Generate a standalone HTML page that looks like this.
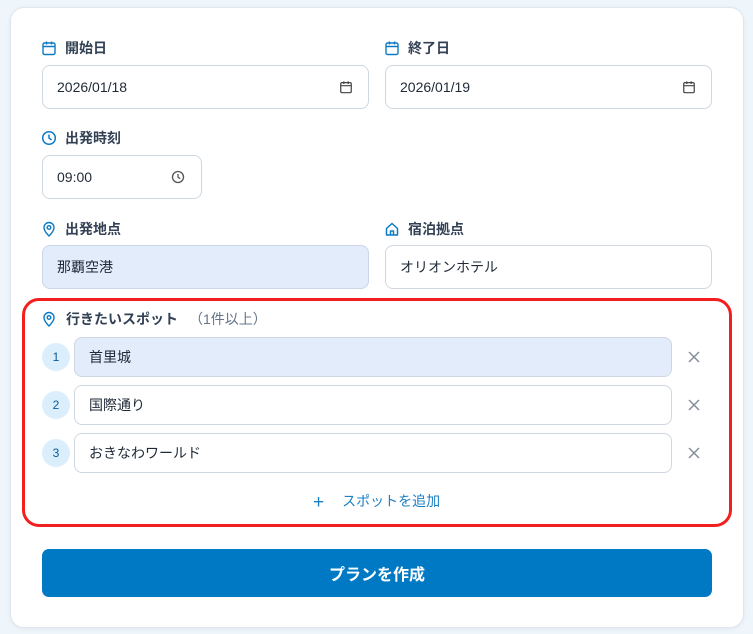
<!DOCTYPE html><html><head><meta charset="utf-8"><style>
*{box-sizing:border-box;margin:0;padding:0}
body{width:753px;height:634px;background:#eef5fb;font-family:"Liberation Sans","Noto Sans CJK JP",sans-serif;position:relative;overflow:hidden;color:#1e293b}
.card{position:absolute;left:10px;top:7px;width:734px;height:621px;background:#fff;border-radius:14px;border:1px solid #dfe6ee;box-shadow:0 1px 4px rgba(0,0,0,.06)}
.a{position:absolute}
.lbl{position:absolute;font-size:14px;font-weight:bold;color:#334155;display:flex;align-items:center;gap:8px;height:20px}
.lbl svg{width:16px;height:16px}
.in{position:absolute;border:1px solid #cfd7e1;border-radius:8px;background:#fff;font-size:14px;color:#1f2937;display:flex;align-items:center;padding-left:14px}
.blue{background:#e2ecfa}
.num{position:absolute;width:28px;height:28px;border-radius:50%;background:#dbeefb;color:#0b5a96;font-size:12px;display:flex;align-items:center;justify-content:center}
.x{position:absolute;width:12px;height:12px}
</style></head><body>
<div class="card"></div>
<svg width="0" height="0" style="position:absolute"><defs>
<symbol id="cal" viewBox="0 0 16 16"><rect x="2" y="3" width="12" height="11.5" rx="1.5" fill="none" stroke="currentColor" stroke-width="1.4"/><path d="M2 6.5h12M5.5 1.5v3M10.5 1.5v3" stroke="currentColor" stroke-width="1.4"/></symbol>
<symbol id="clk" viewBox="0 0 16 16"><circle cx="8" cy="8" r="6.3" fill="none" stroke="currentColor" stroke-width="1.5"/><path d="M8 4.5V8l2.5 2" fill="none" stroke="currentColor" stroke-width="1.5"/></symbol>
<symbol id="pin" viewBox="0 0 16 16"><path d="M8 15s5-4.6 5-8.5A5 5 0 0 0 3 6.5C3 10.4 8 15 8 15z" fill="none" stroke="currentColor" stroke-width="1.4"/><circle cx="8" cy="6.5" r="1.8" fill="none" stroke="currentColor" stroke-width="1.4"/></symbol>
<symbol id="home" viewBox="0 0 16 16"><path d="M2.5 7.5L8 2.5l5.5 5V14h-11z M6.5 14v-4h3v4" fill="none" stroke="currentColor" stroke-width="1.5" stroke-linejoin="round"/></symbol>
<symbol id="xx" viewBox="0 0 12 12"><path d="M1 1L11 11M11 1L1 11" stroke="#808a99" stroke-width="1.4"/></symbol>
</defs></svg>
<div class="lbl" style="left:41px;top:38px"><svg style="color:#0c7bc4"><use href="#cal"/></svg>開始日</div>
<div class="lbl" style="left:384px;top:38px"><svg style="color:#0c7bc4"><use href="#cal"/></svg>終了日</div>
<div class="in" style="left:42px;top:65px;width:327px;height:44px">2026/01/18<svg class="a" style="left:296px;top:14px;width:14px;height:14px;color:#444"><use href="#cal"/></svg></div>
<div class="in" style="left:385px;top:65px;width:327px;height:44px">2026/01/19<svg class="a" style="left:296px;top:14px;width:14px;height:14px;color:#444"><use href="#cal"/></svg></div>
<div class="lbl" style="left:41px;top:128px"><svg style="color:#0c7bc4"><use href="#clk"/></svg>出発時刻</div>
<div class="in" style="left:42px;top:155px;width:160px;height:44px">09:00<svg class="a" style="left:128px;top:14px;width:14px;height:14px;color:#555"><use href="#clk"/></svg></div>
<div class="lbl" style="left:41px;top:219px"><svg style="color:#0c7bc4"><use href="#pin"/></svg>出発地点</div>
<div class="lbl" style="left:384px;top:219px"><svg style="color:#0c7bc4"><use href="#home"/></svg>宿泊拠点</div>
<div class="in blue" style="left:42px;top:245px;width:327px;height:44px;border-color:#c9d6e8">那覇空港</div>
<div class="in" style="left:385px;top:245px;width:327px;height:44px">オリオンホテル</div>
<div class="a" style="left:22px;top:298px;width:710px;height:229px;border:3.5px solid #f31f1f;border-radius:17px"></div>
<div class="lbl" style="left:41px;top:309px;gap:9px"><svg style="color:#0c7bc4"><use href="#pin"/></svg>行きたいスポット<span style="font-weight:normal;color:#64748b;margin-left:2px">（1件以上）</span></div>
<div class="num" style="left:42px;top:343px">1</div>
<div class="in blue" style="left:74px;top:337px;width:598px;height:40px">首里城</div>
<svg class="x" style="left:688px;top:351px"><use href="#xx"/></svg>
<div class="num" style="left:42px;top:391px">2</div>
<div class="in" style="left:74px;top:385px;width:598px;height:40px">国際通り</div>
<svg class="x" style="left:688px;top:399px"><use href="#xx"/></svg>
<div class="num" style="left:42px;top:439px">3</div>
<div class="in" style="left:74px;top:433px;width:598px;height:40px">おきなわワールド</div>
<svg class="x" style="left:688px;top:447px"><use href="#xx"/></svg>
<div class="a" style="left:313px;top:491px;font-size:14px;color:#1b7fc4"><span style="font-size:19px;margin-right:18px;vertical-align:-2px">+</span>スポットを追加</div>
<div class="a" style="left:42px;top:549px;width:670px;height:48px;background:#0079c5;border-radius:7px;color:#fff;font-weight:bold;font-size:16px;display:flex;align-items:center;justify-content:center">プランを作成</div>
</body></html>
